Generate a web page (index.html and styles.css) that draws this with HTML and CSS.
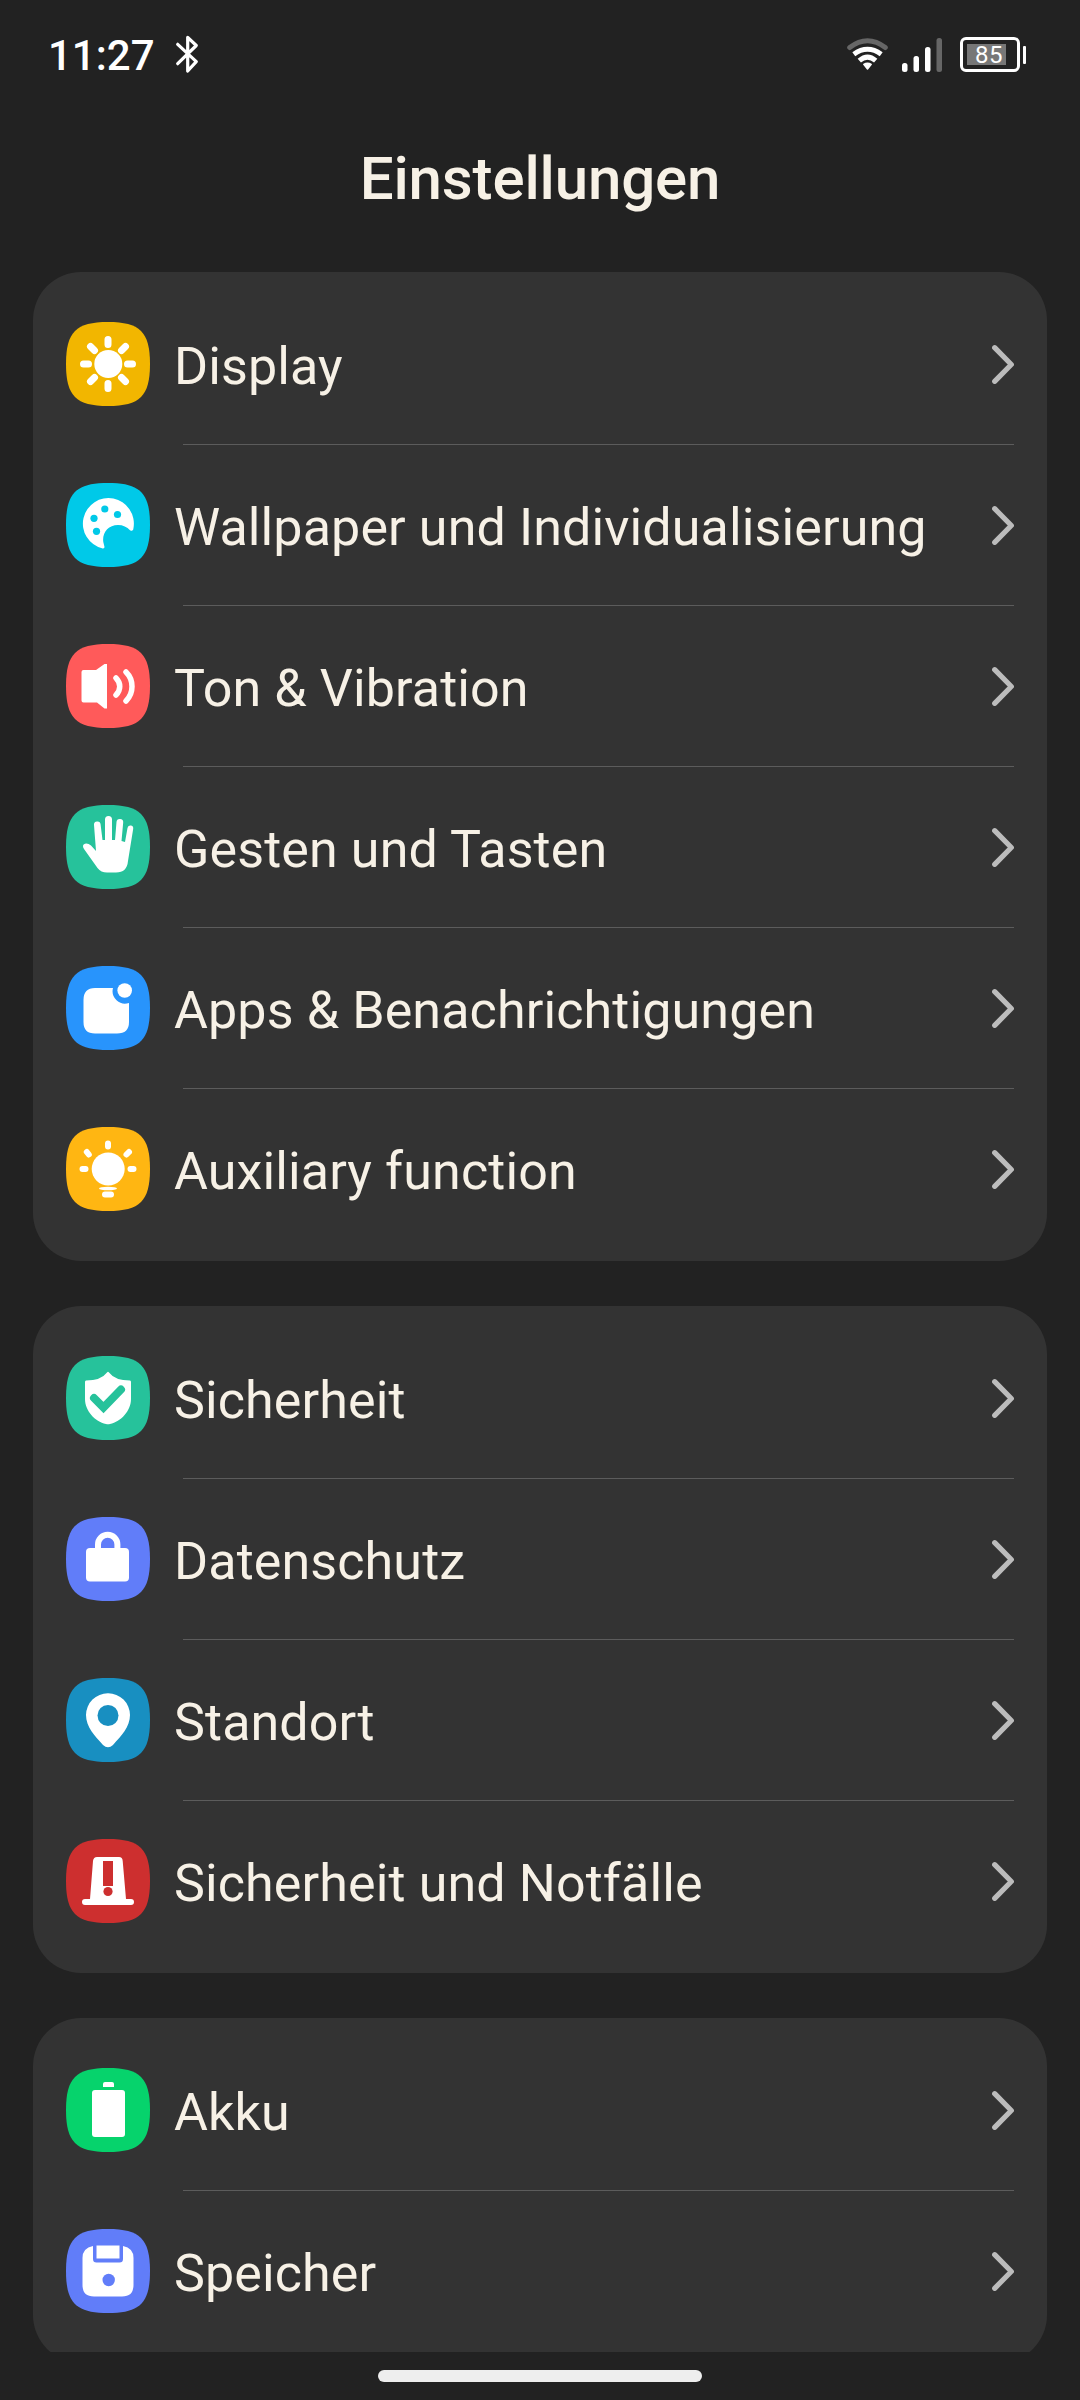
FILE: index.html
```html
<!DOCTYPE html>
<html lang="de">
<head>
<meta charset="utf-8">
<title>Einstellungen</title>
<link rel="stylesheet" href="styles.css">
</head>
<body>
<svg class="defs" aria-hidden="true">
  <symbol id="tile" viewBox="0 0 84 84"><path d="M42 0C74 0 84 10 84 42S74 84 42 84 0 74 0 42 10 0 42 0Z"/></symbol>
  <symbol id="chevron" viewBox="0 0 24 40"><path d="M4.700 3.700 21.300 20.500 4.700 37.300" fill="none" stroke="#bcbcbc" stroke-width="5.200" stroke-linecap="round" stroke-linejoin="round"/></symbol>
</svg>
<div class="screen">
  <header class="status">
    <span class="clock">11:27</span>
    <svg class="bluetooth" viewBox="0 0 24 40"><path d="M2.700 9.300 21.300 26.700 12.700 36V2.300L21.300 10.500 2.700 28.700" fill="none" stroke="#fff" stroke-width="3.200" stroke-linejoin="round" stroke-linecap="round"/></svg>
    <svg class="wifi" viewBox="0 0 42 34" fill="none" stroke-linecap="round">
      <path d="M2.700 9.500Q20.500-4 38.300 9.500" stroke="#666" stroke-width="5"/>
      <path d="M6.800 16.200Q20.500 6.400 34.200 16.200M12.300 22.700Q20.500 15.500 28.700 22.700" stroke="#fff" stroke-width="5" stroke-linecap="butt"/>
      <path d="M16.800 26.300Q20.500 24 24.200 26.300L20.500 31Z" fill="#fff" stroke="#fff" stroke-width="1.500" stroke-linejoin="round"/>
    </svg>
    <svg class="signal" viewBox="0 0 40 34" fill="#fff">
      <rect x="0" y="25" width="5.500" height="9" rx="2.500"/><rect x="11.500" y="18" width="5.500" height="16" rx="2.500"/><rect x="23" y="9" width="5.500" height="25" rx="2.500"/><rect x="34.500" y="0" width="5.500" height="34" rx="2.500" fill="#666"/>
    </svg>
    <div class="battery"><span class="level">85</span></div>
    <i class="battery-tip"></i>
  </header>
  <h1 class="title">Einstellungen</h1>
  <main class="list">
    <section class="card">
      <div class="row">
        <svg class="icon amber" viewBox="0 0 84 84"><use href="#tile"/><circle cx="42.300" cy="42" r="14" fill="#fff"/><path d="M42 17.500v5M42 61.500v5M17.500 42h5M61.500 42h5M24.500 24.500l4 4M55.500 28.500l4-4M24.500 59.500l4-4M55.500 55.500l4 4" stroke="#fff" stroke-width="7" stroke-linecap="round"/></svg>
        <span class="label">Display</span><svg class="chevron"><use href="#chevron"/></svg>
      </div>
      <div class="row">
        <svg class="icon cyan" viewBox="0 0 84 84"><use href="#tile"/><path d="M38.500 64Q38.500 66 36 65.300A25.500 25.500 0 1 1 67.500 45Q67.500 49 64 47.300C61 44 57 42 52 42C42 42 36 50 37.300 59Z" fill="#fff"/><circle cx="38.800" cy="26" r="3.600"/><circle cx="51.500" cy="31.500" r="3.600"/><circle cx="28" cy="35.300" r="3.600"/><circle cx="30.500" cy="48.300" r="3.600"/></svg>
        <span class="label">Wallpaper und Individualisierung</span><svg class="chevron"><use href="#chevron"/></svg>
      </div>
      <div class="row">
        <svg class="icon coral" viewBox="0 0 84 84"><use href="#tile"/><path d="M17.500 26H30L38.500 20H41V64.500H38.500L31 58.500H17.500Q15.500 58.500 15.500 56.500V28Q15.500 26 17.500 26Z" fill="#fff"/><path d="M50 34C55 39 55 46 50 51M60 28C68 36 68 49 60 57" fill="none" stroke="#fff" stroke-width="5.500" stroke-linecap="round"/></svg>
        <span class="label">Ton &amp; Vibration</span><svg class="chevron"><use href="#chevron"/></svg>
      </div>
      <div class="row">
        <svg class="icon green" viewBox="0 0 84 84"><use href="#tile"/><path d="M30 46 28 20a3.300 3.300 0 0 1 6.600-.5L36.500 35H39V14.500a3.500 3.500 0 0 1 7 0V35H49L50.500 17a3.300 3.300 0 0 1 6.700.5L55.500 36 59 37 61.500 23a2.800 2.800 0 0 1 5.700.8L62 56Q61 67.500 50 67.500H41Q35 67.500 31.500 63L18 44Q15.500 40 19 38.700 22 38 25 40.500Z" fill="#fff"/></svg>
        <span class="label">Gesten und Tasten</span><svg class="chevron"><use href="#chevron"/></svg>
      </div>
      <div class="row">
        <svg class="icon blue" viewBox="0 0 84 84"><use href="#tile"/><path d="M29 22H47A12.500 12.500 0 0 0 63 37V56Q63 67.500 51 67.500H29Q17.500 67.500 17.500 56V34Q17.500 22 29 22Z" fill="#fff"/><circle cx="58.700" cy="24.500" r="7.300" fill="#fff"/></svg>
        <span class="label">Apps &amp; Benachrichtigungen</span><svg class="chevron"><use href="#chevron"/></svg>
      </div>
      <div class="row">
        <svg class="icon orange" viewBox="0 0 84 84"><use href="#tile"/><circle cx="42.200" cy="42" r="16.500" fill="#fff"/><path d="M42 16.500v3M16.500 42h3M64.500 42h3M20.800 25l2 2.500M63 25l-2.500 2.500" stroke="#fff" stroke-width="6" stroke-linecap="round"/><ellipse cx="42" cy="61.500" rx="9" ry="1.700" fill="#fff"/><rect x="36" y="64.500" width="12" height="6" rx="3" fill="#fff"/></svg>
        <span class="label">Auxiliary function</span><svg class="chevron"><use href="#chevron"/></svg>
      </div>
    </section>
    <section class="card">
      <div class="row">
        <svg class="icon green" viewBox="0 0 84 84"><use href="#tile"/><path d="M41 16.500Q42 15 43 16.500 49 24.500 64 24.500 65 24.500 65 26V43C65 55 55 65.500 44 68Q42 68.500 40 68C29 65.500 19 55 19 43V26Q19 24.500 20 24.500 35 24.500 41 16.500Z" fill="#fff"/><path d="M28 42 37.500 51.500 55 33.500" fill="none" class="cut" stroke-width="8" stroke-linecap="round"/></svg>
        <span class="label">Sicherheit</span><svg class="chevron"><use href="#chevron"/></svg>
      </div>
      <div class="row">
        <svg class="icon indigo" viewBox="0 0 84 84"><use href="#tile"/><rect x="20" y="31" width="43" height="33.500" rx="4" fill="#fff"/><path d="M32 34V27.500a9.700 9.700 0 0 1 19.400 0V34" fill="none" stroke="#fff" stroke-width="6"/></svg>
        <span class="label">Datenschutz</span><svg class="chevron"><use href="#chevron"/></svg>
      </div>
      <div class="row">
        <svg class="icon ocean" viewBox="0 0 84 84"><use href="#tile"/><path d="M42 15.300A21.800 21.800 0 0 0 20 37C20 49 29 58 37 67Q42 71.500 47 67C55 58 64 49 64 37A21.800 21.800 0 0 0 42 15.300Z" fill="#fff"/><circle cx="42" cy="37.500" r="10.500"/></svg>
        <span class="label">Standort</span><svg class="chevron"><use href="#chevron"/></svg>
      </div>
      <div class="row">
        <svg class="icon red" viewBox="0 0 84 84"><use href="#tile"/><path d="M31 18H53Q56.500 18 56.700 22L60 60H65a3 3 0 0 1 0 6H19a3 3 0 0 1 0-6H24L27 22Q27.500 18 31 18Z" fill="#fff"/><path d="M37 22h10v25H37Z"/><circle cx="42" cy="52.500" r="4.600"/></svg>
        <span class="label">Sicherheit und Notfälle</span><svg class="chevron"><use href="#chevron"/></svg>
      </div>
    </section>
    <section class="card">
      <div class="row">
        <svg class="icon emerald" viewBox="0 0 84 84"><use href="#tile"/><path d="M37 19V16Q37 14 39 14H46Q48 14 48 16V19Z" fill="#fff"/><rect x="26" y="22" width="33" height="47" rx="3" fill="#fff"/></svg>
        <span class="label">Akku</span><svg class="chevron"><use href="#chevron"/></svg>
      </div>
      <div class="row">
        <svg class="icon indigo" viewBox="0 0 84 84"><use href="#tile"/><path d="M27 17V30Q27 33.500 30.500 33.500H53.500Q57 33.500 57 30V17Q67.500 19 67.500 29V56Q67.500 67.500 56 67.500H28Q16.500 67.500 16.500 56V29Q16.500 19 27 17Z" fill="#fff"/><path d="M30.500 16.500H53.500V29.500H30.500Z" fill="#fff"/><circle cx="42.700" cy="51" r="6.200"/></svg>
        <span class="label">Speicher</span><svg class="chevron"><use href="#chevron"/></svg>
      </div>
    </section>
  </main>
  <footer class="nav"><i class="handle"></i></footer>
</div>
</body>
</html>
```
FILE: styles.css
```css
* { box-sizing: border-box; }
body { margin: 0; background: #222; font-family: Roboto, sans-serif; }
.defs { display: none; }
.screen { width: 1080px; height: 2400px; display: flex; flex-direction: column; overflow: hidden; }
.status { height: 109px; flex: none; display: flex; align-items: center; padding: 0 54px 0 48px; color: #fff; }
.clock { font-size: 42px; font-weight: 500; line-height: 50px; padding-top: 2px; }
.bluetooth { width: 24px; height: 40px; margin: 0 auto 0 20px; }
.wifi { width: 42px; height: 34px; margin-right: 13px; }
.signal { width: 40px; height: 34px; margin-right: 18px; }
.battery { width: 60px; height: 35px; padding: 4px; border: 3px solid #fff; border-radius: 6px; display: flex; }
.level { width: 39px; height: 21px; padding-left: 8px; background: #777; font-size: 24px; line-height: 23px; letter-spacing: 0.5px; }
.battery-tip { width: 3px; height: 18px; margin-left: 3px; background: #fff; border-radius: 1px; }
.title { margin: 0; height: 163px; flex: none; padding-top: 34px; text-align: center; font-size: 60px; font-weight: 500; line-height: 72px; letter-spacing: -0.15px; color: #f7f1e6; }
.list { flex: none; height: 2080px; overflow: hidden; padding: 0 33px; display: flex; flex-direction: column; gap: 45px; }
.card { flex: none; padding: 12px 33px; background: #333; border-radius: 48px; }
.row { display: flex; align-items: center; height: 160px; }
.row + .row { height: 161px; background: linear-gradient(#5c5c5c, #5c5c5c) 117px 0 / 831px 1px no-repeat; padding-top: 1px; }
.icon { width: 84px; height: 84px; flex: none; fill: currentColor; }
.label { margin-left: 24px; flex: 1; padding-top: 6px; font-size: 52px; line-height: 62px; letter-spacing: 0.12px; color: #f7f1e6; white-space: nowrap; }
.chevron { width: 24px; height: 40px; flex: none; }
.cut { stroke: currentColor; }
.amber { color: #f2b600; }
.cyan { color: #00c9e8; }
.coral { color: #ff5a5a; }
.green { color: #26c29b; }
.blue { color: #2894fc; }
.orange { color: #ffb612; }
.indigo { color: #617df9; }
.ocean { color: #188fc1; }
.red { color: #cd2f2f; }
.emerald { color: #06d36c; }
.nav { height: 48px; flex: none; display: flex; justify-content: center; align-items: center; }
.handle { width: 324px; height: 12px; border-radius: 6px; background: #eee; }
```
